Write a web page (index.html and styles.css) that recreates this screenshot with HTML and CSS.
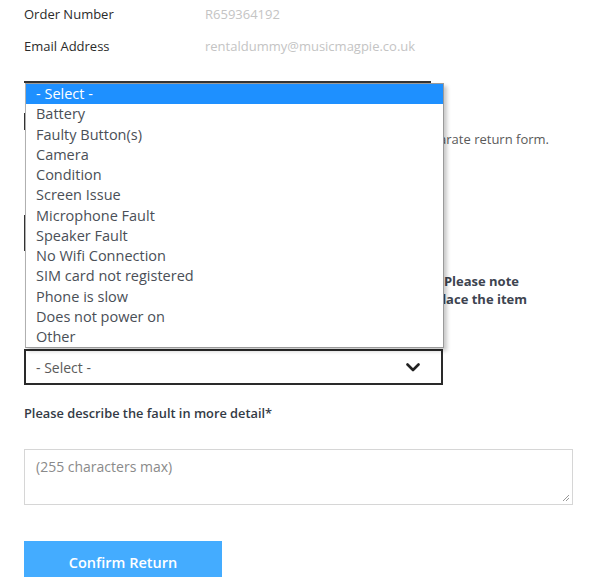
FILE: index.html
```html
<!DOCTYPE html>
<html>
<head>
<meta charset="utf-8">
<link rel="stylesheet" href="styles.css">
</head>
<body>
<div class="page">
  <div class="info-row"><span class="info-label">Order Number</span><span class="info-value">R659364192</span></div>
  <div class="info-row"><span class="info-label">Email Address</span><span class="info-value">rentaldummy@musicmagpie.co.uk</span></div>

  <div class="form">
    <div class="box-a"><div class="box-a-edge"></div></div>
    <p class="note">If you wish to return more than one item, please complete a separate return form.</p>
    <div class="box-b"></div>
    <div class="warn">
      <span class="warn-line l1">Items returned without a fault may be charged. Please note</span>
      <span class="warn-line l2">we will inspect your device before we replace the item</span>
    </div>

    <div class="select">
      <span>- Select -</span>
      <svg class="chev" width="14" height="9" viewBox="0 0 14 9"><path d="M1.5 1.5 L7 7 L12.5 1.5" fill="none" stroke="#222" stroke-width="2.6" stroke-linecap="round" stroke-linejoin="round"/></svg>
    </div>

    <label class="detail-label">Please describe the fault in more detail*</label>
    <div class="textarea">
      <span class="placeholder">(255 characters max)</span>
      <svg class="grip" width="8" height="8" viewBox="0 0 8 8"><path d="M7 1 L1 7 M7 4 L4 7" stroke="#999" stroke-width="1"/></svg>
    </div>

    <button class="confirm">Confirm Return</button>

    <ul class="popup">
      <li class="active">- Select -</li>
      <li>Battery</li>
      <li>Faulty Button(s)</li>
      <li>Camera</li>
      <li>Condition</li>
      <li>Screen Issue</li>
      <li>Microphone Fault</li>
      <li>Speaker Fault</li>
      <li>No Wifi Connection</li>
      <li>SIM card not registered</li>
      <li>Phone is slow</li>
      <li>Does not power on</li>
      <li>Other</li>
    </ul>
  </div>
</div>
</body>
</html>
```

FILE: styles.css
```css
* { box-sizing: border-box; }
html, body { margin: 0; padding: 0; background: #fff; }
body {
  font-family: "Open Sans", "Liberation Sans", sans-serif;
  color: #333;
  overflow: hidden;
}
.page {
  padding: 4px 24px 0 24px;
  width: 590px;
}
.info-row {
  display: flex;
  height: 32px;
  line-height: 20px;
  font-size: 13px;
}
.info-label {
  width: 181px;
  color: #2b2b2b;
}
.info-value {
  color: #c4c4c4;
}
.form {
  position: relative;
  margin-top: 13px;
}
.box-a {
  width: 407px;
  height: 48px;
  border-top: 2px solid #333;
}
.box-a-edge {
  margin-top: 30px;
  height: 17px;
  border-left: 2px solid #333;
}
.note {
  margin: 0;
  width: 525px;
  height: 20px;
  line-height: 20px;
  font-size: 13px;
  color: #5a5a5a;
  white-space: nowrap;
  text-align: right;
}
.box-b {
  height: 36px;
  width: 419px;
  margin-top: 66px;
  border: 2px solid #333;
}
.warn {
  margin-top: 21px;
  font-size: 13px;
  line-height: 18px;
  font-weight: 700;
  color: #3d4450;
  white-space: nowrap;
}
.warn-line {
  display: block;
  text-align: right;
}
.warn-line.l1 { width: 495px; }
.warn-line.l2 { width: 503px; }
.select {
  margin-top: 41px;
  width: 419px;
  height: 36px;
  border: 2px solid #2a2a2a;
  display: flex;
  align-items: center;
  justify-content: space-between;
  padding: 0 21px 0 10px;
  font-size: 14px;
  color: #5a5a5a;
}
.chev { display: block; }
.detail-label {
  display: block;
  margin-top: 18px;
  font-size: 12.8px;
  line-height: 20px;
  font-weight: 600;
  color: #333a45;
}
.textarea {
  position: relative;
  margin-top: 26px;
  width: 549px;
  height: 56px;
  border: 1px solid #d6d6d6;
  padding: 7px 11px;
  font-size: 14px;
  line-height: 20px;
}
.placeholder { color: #8a8a8a; }
.grip {
  position: absolute;
  right: 2px;
  bottom: 2px;
}
.confirm {
  display: block;
  margin-top: 36px;
  width: 198px;
  height: 44px;
  border: none;
  background: #44acff;
  color: #fff;
  font-family: "Open Sans", "Liberation Sans", sans-serif;
  font-size: 14.5px;
  font-weight: 600;
  padding: 0 0 2px 0;
}
.popup {
  position: absolute;
  left: 1px;
  top: 2px;
  width: 419px;
  height: 265px;
  margin: 0;
  padding: 0;
  list-style: none;
  background: #fff;
  border: 1px solid #9a9a9a;
  border-left-color: #b0b0b0;
  box-shadow: 3px 3px 4px rgba(0,0,0,0.22);
  font-size: 14.5px;
  color: #4a4f57;
}
.popup li {
  height: 20.25px;
  line-height: 20.25px;
  padding-left: 10px;
}
.popup li.active {
  background: #1e90ff;
  color: #fff;
}
```
